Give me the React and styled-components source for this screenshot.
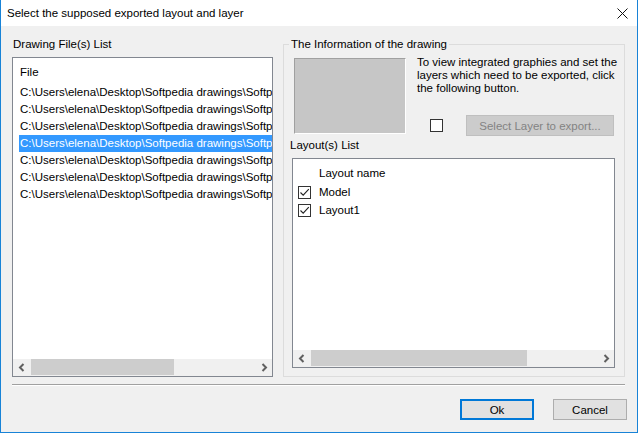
import React from "react";
import styled, { createGlobalStyle } from "styled-components";

const GlobalStyle = createGlobalStyle`
  html, body {
    margin: 0;
    padding: 0;
    background: #f0f0f0;
  }
  * {
    box-sizing: border-box;
  }
`;

const FONT = `"Segoe UI", "Liberation Sans", Arial, sans-serif`;

// the list column clips these paths, only the visible part is kept
const files = Array.from(
  { length: 7 },
  () => `C:\\Users\\elena\\Desktop\\Softpedia drawings\\Softped`
);

const layouts = ["Model", "Layout1"];

const App = () => {
  return (
    <>
      <GlobalStyle />
      <Window>
        <TitleBar>
          <Title>Select the supposed exported layout and layer</Title>
          <CloseButton>
            <svg width="11" height="11" viewBox="0 0 11 11">
              <path d="M0.5 0.5 L10.5 10.5 M10.5 0.5 L0.5 10.5" stroke="#111" strokeWidth="1" />
            </svg>
          </CloseButton>
        </TitleBar>
        <Body>
          <Panels>
            <LeftColumn>
              <Label>Drawing File(s) List</Label>
              <ListBox height={320}>
                <ListContent>
                  <FileHeader>File</FileHeader>
                  {files.map((f, i) => (
                    <FileRow key={i} selected={i === 3}>
                      {f}
                    </FileRow>
                  ))}
                </ListContent>
                <HScroll thumbLeft={18} thumbWidth={143} />
              </ListBox>
            </LeftColumn>
            <GroupBox>
              <Legend>The Information of the drawing</Legend>
              <InfoRow>
                <Preview />
                <InfoSide>
                  <InfoText>
                    To view integrated graphies and set the
                    <br />
                    layers which need to be exported, click
                    <br />
                    the following button.
                  </InfoText>
                  <ActionRow>
                    <CheckBox />
                    <DisabledButton>Select Layer to export...</DisabledButton>
                  </ActionRow>
                </InfoSide>
              </InfoRow>
              <SubLabel>Layout(s) List</SubLabel>
              <ListBox height={210}>
                <ListContent>
                  <LayoutHeader>Layout name</LayoutHeader>
                  {layouts.map((l) => (
                    <LayoutRow key={l}>
                      <CheckBox checked>
                        <svg width="11" height="11" viewBox="0 0 11 11">
                          <path d="M1.5 5.5 L4.2 8.2 L9.8 2.2" stroke="#222" strokeWidth="1.1" fill="none" />
                        </svg>
                      </CheckBox>
                      <span>{l}</span>
                    </LayoutRow>
                  ))}
                </ListContent>
                <HScroll thumbLeft={18} thumbWidth={216} />
              </ListBox>
            </GroupBox>
          </Panels>
          <Separator />
          <ButtonRow>
            <Button primary>Ok</Button>
            <Button>Cancel</Button>
          </ButtonRow>
        </Body>
      </Window>
    </>
  );
};

const HScroll = ({ thumbLeft, thumbWidth }) => (
  <ScrollTrack>
    <ScrollArrow>
      <svg width="8" height="9" viewBox="0 0 8 9">
        <path d="M5.5 1 L2 4.5 L5.5 8" stroke="#606060" strokeWidth="2" fill="none" />
      </svg>
    </ScrollArrow>
    <ScrollThumb style={{ marginLeft: thumbLeft - 17, width: thumbWidth }} />
    <ScrollSpacer />
    <ScrollArrow>
      <svg width="8" height="9" viewBox="0 0 8 9">
        <path d="M2.5 1 L6 4.5 L2.5 8" stroke="#606060" strokeWidth="2" fill="none" />
      </svg>
    </ScrollArrow>
  </ScrollTrack>
);

const Window = styled.div`
  position: relative;
  width: 638px;
  height: 433px;
  display: flex;
  flex-direction: column;
  border: 1px solid #1883d7;
  border-top: none;
  background: #f0f0f0;
  font-family: ${FONT};
  font-size: 11.5px;
  color: #000;
  overflow: hidden;
`;

const TitleBar = styled.div`
  height: 26px;
  flex: none;
  display: flex;
  align-items: center;
  justify-content: space-between;
  background: #fff;
  padding: 0 9px 0 6px;
`;

const Title = styled.span`
  font-size: 11.5px;
  line-height: 16px;
`;

const CloseButton = styled.div`
  display: flex;
  align-items: center;
  justify-content: center;
  width: 11px;
  height: 11px;
`;

const Body = styled.div`
  position: relative;
  flex: 1;
  display: flex;
  flex-direction: column;
  padding: 10px 10px 12px 11px;
`;

const Panels = styled.div`
  display: flex;
  gap: 10px;
  height: 341px;
`;

const LeftColumn = styled.div`
  width: 261px;
  flex: none;
  display: flex;
  flex-direction: column;
  gap: 5px;
`;

const Label = styled.div`
  line-height: 16px;
  padding-left: 1px;
`;

const ListBox = styled.div`
  height: ${({ height }) => height}px;
  flex: none;
  border: 1px solid #828790;
  background: #fff;
  display: flex;
  flex-direction: column;
  overflow: hidden;
`;

const ListContent = styled.div`
  flex: 1;
  overflow: hidden;
`;

const FileHeader = styled.div`
  height: 26px;
  padding: 6px 0 0 7px;
  line-height: 16px;
`;

const FileRow = styled.div`
  height: 17px;
  line-height: 17px;
  margin-left: 6px;
  padding-left: 1px;
  white-space: nowrap;
  overflow: hidden;
  background: ${({ selected }) => (selected ? "#3399ff" : "transparent")};
  color: ${({ selected }) => (selected ? "#fff" : "#000")};
`;

const ScrollTrack = styled.div`
  height: 17px;
  flex: none;
  display: flex;
  align-items: stretch;
  background: #f0f0f0;
`;

const ScrollArrow = styled.div`
  width: 17px;
  flex: none;
  display: flex;
  align-items: center;
  justify-content: center;
`;

const ScrollThumb = styled.div`
  flex: none;
  background: #cdcdcd;
  margin: 0 0 1px 0;
`;

const ScrollSpacer = styled.div`
  flex: 1;
`;

const GroupBox = styled.fieldset`
  width: 342px;
  height: 341px;
  flex: none;
  margin: 0;
  padding: 0 9px 0 8px;
  border: 1px solid #dcdcdc;
  display: flex;
  flex-direction: column;
  min-width: 0;
`;

const Legend = styled.legend`
  padding: 0 2px;
  margin-left: -3px;
  line-height: 16px;
`;

const InfoRow = styled.div`
  display: flex;
  align-items: flex-start;
  margin-top: 6px;
`;

const Preview = styled.div`
  width: 112px;
  height: 76px;
  flex: none;
  margin-left: 2px;
  background: #c6c6c6;
  border-top: 1px solid #a0a0a0;
  border-left: 1px solid #a0a0a0;
  border-right: 1px solid #fff;
  border-bottom: 1px solid #fff;
`;

const InfoSide = styled.div`
  margin-left: 11px;
  margin-top: -2px;
  display: flex;
  flex-direction: column;
`;

const InfoText = styled.div`
  line-height: 13px;
  white-space: nowrap;
`;

const ActionRow = styled.div`
  display: flex;
  align-items: center;
  gap: 23px;
  padding-left: 13px;
  margin-top: 20px;
`;

const CheckBox = styled.div`
  width: 13px;
  height: 13px;
  flex: none;
  border: 1px solid #333;
  background: #fff;
  display: flex;
  align-items: center;
  justify-content: center;
`;

const DisabledButton = styled.div`
  width: 148px;
  height: 21px;
  flex: none;
  background: #cccccc;
  border: 1px solid #bfbfbf;
  color: #838383;
  display: flex;
  align-items: center;
  justify-content: center;
`;

const SubLabel = styled.div`
  margin-top: 1px;
  margin-left: -2px;
  line-height: 16px;
  margin-bottom: 5px;
`;

const LayoutHeader = styled.div`
  padding: 5px 0 0 26px;
  line-height: 18px;
  height: 24px;
`;

const LayoutRow = styled.div`
  height: 18px;
  display: flex;
  align-items: center;
  gap: 8px;
  padding-left: 5px;
  line-height: 18px;
`;

const Separator = styled.div`
  margin-top: 7px;
  height: 2px;
  width: 613px;
  border-top: 1px solid #a0a0a0;
  border-bottom: 1px solid #fff;
`;

const ButtonRow = styled.div`
  margin-top: 13px;
  display: flex;
  justify-content: flex-end;
  gap: 19px;
`;

const Button = styled.div`
  width: 74px;
  height: 21px;
  display: flex;
  align-items: center;
  justify-content: center;
  background: #e1e1e1;
  border: ${({ primary }) => (primary ? "2px solid #0078d7" : "1px solid #adadad")};
`;

export default App;
